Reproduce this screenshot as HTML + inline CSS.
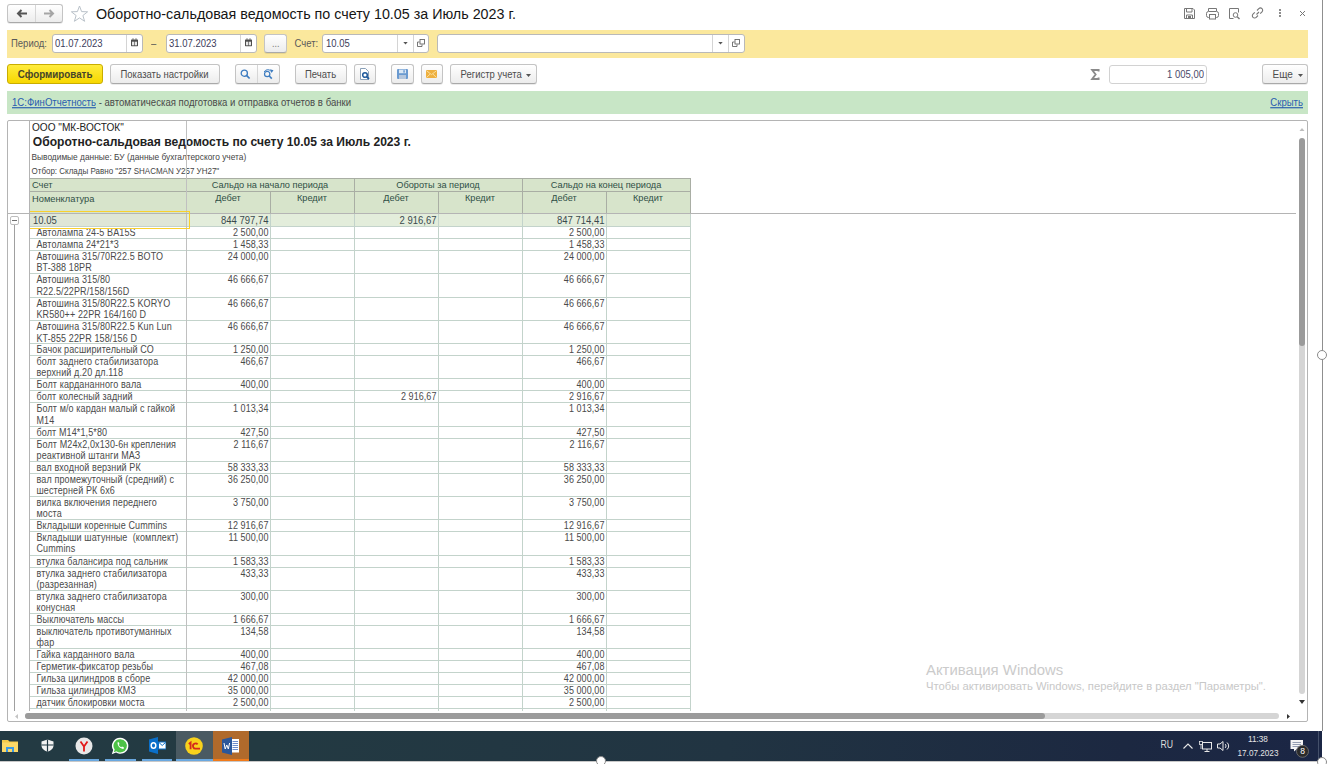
<!DOCTYPE html>
<html><head><meta charset="utf-8"><style>
html,body{margin:0;padding:0}
body{width:1327px;height:764px;overflow:hidden;position:relative;background:#fff;font-family:"Liberation Sans",sans-serif}
.a{position:absolute}
.t{position:absolute;white-space:pre;line-height:1}
svg.a{overflow:visible}
</style></head><body>
<div class="a" style="left:7px;top:4px;width:56px;height:19px;box-sizing:border-box;border:1px solid #c4c4c4;border-bottom-color:#a9a9a9;border-radius:3px;background:linear-gradient(#ffffff,#ececec);box-shadow:0 1px 0 rgba(0,0,0,0.08);"></div>
<div class="a" style="left:35px;top:5px;width:1px;height:17px;background:#d6d6d6"></div>
<svg class="a" style="left:16px;top:9px" width="12" height="9" viewBox="0 0 12 9"><path d="M11 4.5H3M5.5 1L2 4.5L5.5 8" fill="none" stroke="#555" stroke-width="2"/></svg>
<svg class="a" style="left:43px;top:9px" width="12" height="9" viewBox="0 0 12 9"><path d="M1 4.5H9M6.5 1L10 4.5L6.5 8" fill="none" stroke="#a5a5a5" stroke-width="2"/></svg>
<svg class="a" style="left:70px;top:5px" width="19" height="17" viewBox="0 0 19 17"><path d="M9.5 1L11.6 6.6L17.6 6.8L12.9 10.5L14.6 16.3L9.5 12.9L4.4 16.3L6.1 10.5L1.4 6.8L7.4 6.6Z" fill="none" stroke="#b9c1c9" stroke-width="1"/></svg>
<div class="t" style="left:96.00px;top:7px;font-size:14.3px;color:#151515;font-weight:400;transform:scaleY(1.07);transform-origin:50% 12px;">Оборотно-сальдовая ведомость по счету 10.05 за Июль 2023 г.</div>
<svg class="a" style="left:1183px;top:7px" width="13" height="13" viewBox="0 0 13 13"><path d="M1.5 1.5H10L11.5 3V11.5H1.5Z" fill="none" stroke="#777" stroke-width="1"/><path d="M3.5 1.5V5H9V1.5M3.5 11.5V8H9.5V11.5" fill="none" stroke="#777" stroke-width="1"/><rect x="5" y="9" width="3" height="2" fill="#777"/></svg>
<svg class="a" style="left:1205px;top:7px" width="15" height="13" viewBox="0 0 15 13"><path d="M3.5 4V1.5H11.5V4" fill="none" stroke="#777"/><rect x="1.5" y="4.5" width="12" height="6" rx="2" fill="none" stroke="#777"/><rect x="4.5" y="7.5" width="6" height="4.5" fill="#fff" stroke="#777"/></svg>
<svg class="a" style="left:1228px;top:7px" width="13" height="13" viewBox="0 0 13 13"><path d="M10.5 5.5V1.5H1.5V11.5H5.5" fill="none" stroke="#777"/><circle cx="7.5" cy="8" r="2.3" fill="none" stroke="#777"/><path d="M9.2 9.8L11.5 12" stroke="#777" stroke-width="1.4"/></svg>
<svg class="a" style="left:1251px;top:7px" width="13" height="12" viewBox="0 0 13 12"><path d="M5.5 7.5L8 5M6 3.5L7.8 1.7A2.1 2.1 0 0 1 11 4.9L9.2 6.7M7 8.5L5.2 10.3A2.1 2.1 0 0 1 2 7.1L3.8 5.3" fill="none" stroke="#777" stroke-width="1.1"/></svg>
<div class="a" style="left:1278.5px;top:9px;width:2px;height:2px;background:#666;border-radius:1px"></div>
<div class="a" style="left:1278.5px;top:12px;width:2px;height:2px;background:#666;border-radius:1px"></div>
<div class="a" style="left:1278.5px;top:15px;width:2px;height:2px;background:#666;border-radius:1px"></div>
<svg class="a" style="left:1299px;top:10px" width="7" height="7" viewBox="0 0 7 7"><path d="M1 1L6 6M6 1L1 6" stroke="#777" stroke-width="1"/></svg>
<div class="a" style="left:7px;top:29.5px;width:1301px;height:28px;background:#fbe89d"></div>
<div class="t" style="left:11.00px;top:39px;font-size:9.5px;color:#5a5a5a;font-weight:400;transform:scaleY(1.15);transform-origin:50% 8px;">Период:</div>
<div class="a" style="left:52px;top:34px;width:91px;height:19px;box-sizing:border-box;border:1px solid #b9b9b9;border-radius:3px;background:#fff;"></div>
<div class="a" style="left:126px;top:35px;width:1px;height:17px;background:#d4d4d4"></div>
<div class="t" style="left:55.00px;top:39px;font-size:9.5px;color:#3c3c5a;font-weight:400;transform:scaleY(1.15);transform-origin:50% 8px;">01.07.2023</div>
<svg class="a" style="left:131px;top:38px" width="7" height="9" viewBox="0 0 7 9"><path d="M2 0V2M5 0V2" stroke="#777" stroke-width="0.8"/><rect x="0" y="1.5" width="7" height="6.7" rx="0.6" fill="#4d4d4d"/><rect x="1" y="3.7" width="2.2" height="3.6" fill="#e6e6e6"/><rect x="3.8" y="3.7" width="2.2" height="3.6" fill="#e6e6e6"/></svg>
<div class="t" style="left:151.00px;top:39px;font-size:9.5px;color:#555;font-weight:400;transform:scaleY(1.15);transform-origin:50% 8px;">–</div>
<div class="a" style="left:166px;top:34px;width:91px;height:19px;box-sizing:border-box;border:1px solid #b9b9b9;border-radius:3px;background:#fff;"></div>
<div class="a" style="left:240px;top:35px;width:1px;height:17px;background:#d4d4d4"></div>
<div class="t" style="left:169.00px;top:39px;font-size:9.5px;color:#3c3c5a;font-weight:400;transform:scaleY(1.15);transform-origin:50% 8px;">31.07.2023</div>
<svg class="a" style="left:245px;top:38px" width="7" height="9" viewBox="0 0 7 9"><path d="M2 0V2M5 0V2" stroke="#777" stroke-width="0.8"/><rect x="0" y="1.5" width="7" height="6.7" rx="0.6" fill="#4d4d4d"/><rect x="1" y="3.7" width="2.2" height="3.6" fill="#e6e6e6"/><rect x="3.8" y="3.7" width="2.2" height="3.6" fill="#e6e6e6"/></svg>
<div class="a" style="left:264px;top:34px;width:23px;height:19px;box-sizing:border-box;border:1px solid #c4c4c4;border-bottom-color:#a9a9a9;border-radius:3px;background:linear-gradient(#ffffff,#ececec);box-shadow:0 1px 0 rgba(0,0,0,0.08);"></div>
<div class="t" style="left:272.00px;top:40px;font-size:9px;color:#777;font-weight:400;transform:scaleY(1.15);transform-origin:50% 7px;">...</div>
<div class="t" style="left:294.50px;top:39px;font-size:9.5px;color:#5a5a5a;font-weight:400;transform:scaleY(1.15);transform-origin:50% 8px;">Счет:</div>
<div class="a" style="left:322px;top:34px;width:107px;height:19px;box-sizing:border-box;border:1px solid #b9b9b9;border-radius:3px;background:#fff;"></div>
<div class="a" style="left:397px;top:35px;width:1px;height:17px;background:#d4d4d4"></div>
<div class="a" style="left:413px;top:35px;width:1px;height:17px;background:#d4d4d4"></div>
<div class="t" style="left:326.00px;top:39px;font-size:9.5px;color:#3c3c5a;font-weight:400;transform:scaleY(1.15);transform-origin:50% 8px;">10.05</div>
<svg class="a" style="left:403px;top:42px" width="5" height="3" viewBox="0 0 5 3"><path d="M0.3 0H4.7L2.5 2.6Z" fill="#555"/></svg>
<svg class="a" style="left:417px;top:39px" width="8" height="8" viewBox="0 0 8 8"><rect x="3" y="0.5" width="4.5" height="4.5" fill="none" stroke="#666" stroke-width="0.9"/><path d="M2.5 3H0.5V7.5H5V5.5" fill="none" stroke="#666" stroke-width="0.9"/></svg>
<div class="a" style="left:437px;top:34px;width:308px;height:19px;box-sizing:border-box;border:1px solid #b9b9b9;border-radius:3px;background:#fff;"></div>
<div class="a" style="left:712px;top:35px;width:1px;height:17px;background:#d4d4d4"></div>
<div class="a" style="left:728px;top:35px;width:1px;height:17px;background:#d4d4d4"></div>
<svg class="a" style="left:718px;top:42px" width="5" height="3" viewBox="0 0 5 3"><path d="M0.3 0H4.7L2.5 2.6Z" fill="#555"/></svg>
<svg class="a" style="left:732px;top:39px" width="8" height="8" viewBox="0 0 8 8"><rect x="3" y="0.5" width="4.5" height="4.5" fill="none" stroke="#666" stroke-width="0.9"/><path d="M2.5 3H0.5V7.5H5V5.5" fill="none" stroke="#666" stroke-width="0.9"/></svg>
<div class="a" style="left:7px;top:64px;width:96px;height:20px;box-sizing:border-box;border:1px solid #c9ad00;border-radius:3px;background:linear-gradient(#ffec3d,#f7d700);"></div>
<div class="t" style="left:17.80px;top:70px;font-size:9.8px;color:#45452a;font-weight:700;transform:scaleY(1.15);transform-origin:50% 8px;">Сформировать</div>
<div class="a" style="left:110px;top:64px;width:110px;height:20px;box-sizing:border-box;border:1px solid #c4c4c4;border-bottom-color:#a9a9a9;border-radius:3px;background:linear-gradient(#ffffff,#ececec);box-shadow:0 1px 0 rgba(0,0,0,0.08);"></div>
<div class="t" style="left:120.50px;top:70px;font-size:9.5px;color:#4d4d4d;font-weight:400;transform:scaleY(1.15);transform-origin:50% 8px;">Показать настройки</div>
<div class="a" style="left:235px;top:64px;width:45px;height:20px;box-sizing:border-box;border:1px solid #c4c4c4;border-bottom-color:#a9a9a9;border-radius:3px;background:linear-gradient(#ffffff,#ececec);box-shadow:0 1px 0 rgba(0,0,0,0.08);"></div>
<div class="a" style="left:257px;top:65px;width:1px;height:18px;background:#d6d6d6"></div>
<svg class="a" style="left:240px;top:69px" width="11" height="10" viewBox="0 0 11 10"><circle cx="4.3" cy="4.2" r="3.1" fill="none" stroke="#3d7cc0" stroke-width="1.3"/><path d="M6.5 6.4L9.6 9.5" stroke="#3d7cc0" stroke-width="1.7"/></svg>
<svg class="a" style="left:263px;top:69px" width="11" height="10" viewBox="0 0 11 10"><circle cx="4.2" cy="5" r="2.7" fill="none" stroke="#3d7cc0" stroke-width="1.2"/><path d="M6.2 7L8.8 9.6" stroke="#3d7cc0" stroke-width="1.6"/><path d="M1.2 3A4 4 0 0 1 7.8 2" fill="none" stroke="#3d7cc0" stroke-width="1"/><path d="M7 0.2L10.5 1.2L8.5 4Z" fill="#3d7cc0"/></svg>
<div class="a" style="left:295px;top:64px;width:52px;height:20px;box-sizing:border-box;border:1px solid #c4c4c4;border-bottom-color:#a9a9a9;border-radius:3px;background:linear-gradient(#ffffff,#ececec);box-shadow:0 1px 0 rgba(0,0,0,0.08);"></div>
<div class="t" style="left:305.00px;top:70px;font-size:9.5px;color:#4d4d4d;font-weight:400;transform:scaleY(1.15);transform-origin:50% 8px;">Печать</div>
<div class="a" style="left:354px;top:64px;width:22px;height:20px;box-sizing:border-box;border:1px solid #c4c4c4;border-bottom-color:#a9a9a9;border-radius:3px;background:linear-gradient(#ffffff,#ececec);box-shadow:0 1px 0 rgba(0,0,0,0.08);"></div>
<svg class="a" style="left:359px;top:67px" width="12" height="14" viewBox="0 0 12 14"><path d="M1.5 1.5H6.5L9.5 4.5V12.5H1.5Z" fill="#fff" stroke="#8aa0b8"/><circle cx="6" cy="8" r="2.3" fill="none" stroke="#1f5a9c" stroke-width="1.5"/><path d="M7.6 9.6L10 12" stroke="#1f5a9c" stroke-width="1.8"/></svg>
<div class="a" style="left:391px;top:64px;width:23px;height:20px;box-sizing:border-box;border:1px solid #c4c4c4;border-bottom-color:#a9a9a9;border-radius:3px;background:linear-gradient(#ffffff,#ececec);box-shadow:0 1px 0 rgba(0,0,0,0.08);"></div>
<svg class="a" style="left:397px;top:69px" width="11" height="10" viewBox="0 0 11 10"><rect x="0" y="0" width="11" height="10" rx="1" fill="#6a9ad0"/><rect x="2" y="0.6" width="7" height="3.6" fill="#dbe8f5"/><rect x="6.3" y="1.2" width="1.5" height="2.4" fill="#6a9ad0"/><rect x="2" y="6" width="7" height="4" fill="#b4c6dc"/></svg>
<div class="a" style="left:421px;top:64px;width:22px;height:20px;box-sizing:border-box;border:1px solid #c4c4c4;border-bottom-color:#a9a9a9;border-radius:3px;background:linear-gradient(#ffffff,#ececec);box-shadow:0 1px 0 rgba(0,0,0,0.08);"></div>
<svg class="a" style="left:426px;top:70px" width="11" height="8" viewBox="0 0 11 8"><rect x="0" y="0" width="11" height="8" rx="0.8" fill="#eeb040"/><path d="M0.6 0.8L5.5 4.6L10.4 0.8M0.6 7.4L4 4.2M10.4 7.4L7 4.2" fill="none" stroke="#fbe3a8" stroke-width="0.9"/></svg>
<div class="a" style="left:450px;top:64px;width:87px;height:20px;box-sizing:border-box;border:1px solid #c4c4c4;border-bottom-color:#a9a9a9;border-radius:3px;background:linear-gradient(#ffffff,#ececec);box-shadow:0 1px 0 rgba(0,0,0,0.08);"></div>
<div class="t" style="left:460.50px;top:70px;font-size:9.5px;color:#4d4d4d;font-weight:400;transform:scaleY(1.15);transform-origin:50% 8px;">Регистр учета</div>
<svg class="a" style="left:526px;top:74px" width="5" height="3" viewBox="0 0 5 3"><path d="M0 0H5L2.5 3Z" fill="#555"/></svg>
<svg class="a" style="left:1091px;top:69px" width="9" height="11" viewBox="0 0 9 11"><path d="M7.6 2.6V1H1.2L4.6 5.5L1.2 10H7.6V8.4" fill="none" stroke="#8a8a8a" stroke-width="1.9" stroke-linejoin="miter"/></svg>
<div class="a" style="left:1109px;top:65px;width:98px;height:19px;box-sizing:border-box;border:1px solid #d2d2d2;border-radius:3px;background:#fff;"></div>
<div class="t" style="right:123.00px;top:70px;font-size:9.5px;color:#4a4a6a;font-weight:400;transform:scaleY(1.15);transform-origin:50% 8px;">1 005,00</div>
<div class="a" style="left:1262px;top:64px;width:46px;height:20px;box-sizing:border-box;border:1px solid #c4c4c4;border-bottom-color:#a9a9a9;border-radius:3px;background:linear-gradient(#ffffff,#ececec);box-shadow:0 1px 0 rgba(0,0,0,0.08);"></div>
<div class="t" style="left:1272.50px;top:70px;font-size:10px;color:#4d4d4d;font-weight:400;transform:scaleY(1.15);transform-origin:50% 8px;">Еще</div>
<svg class="a" style="left:1298px;top:74px" width="5" height="3" viewBox="0 0 5 3"><path d="M0 0H5L2.5 3Z" fill="#555"/></svg>
<div class="a" style="left:7px;top:91px;width:1301px;height:23px;background:#c8e6c6"></div>
<div class="t" style="left:12.00px;top:98px;font-size:9.6px;color:#2a5db0;font-weight:400;transform:scaleY(1.15);transform-origin:50% 8px;text-decoration:underline;text-decoration-skip-ink:none;">1С:ФинОтчетность</div>
<div class="t" style="left:96.00px;top:98px;font-size:9.6px;color:#4a4a4a;font-weight:400;transform:scaleY(1.15);transform-origin:50% 8px;white-space:pre;"> - автоматическая подготовка и отправка отчетов в банки</div>
<div class="t" style="right:24.00px;top:98px;font-size:9.6px;color:#2a5db0;font-weight:400;transform:scaleY(1.15);transform-origin:50% 8px;text-decoration:underline;text-decoration-skip-ink:none;">Скрыть</div>
<div class="a" style="left:7px;top:120px;width:1301px;height:602px;box-sizing:border-box;border:1px solid #b4b4b4;border-radius:2px;background:#fff;"></div>
<div class="t" style="left:32.00px;top:123px;font-size:10.1px;color:#222;font-weight:400;transform:scaleY(1.15);transform-origin:50% 8px;">ООО &quot;МК-ВОСТОК&quot;</div>
<div class="t" style="left:32.80px;top:136px;font-size:12.08px;color:#222;font-weight:700;transform:scaleY(1.1);transform-origin:50% 10px;">Оборотно-сальдовая ведомость по счету 10.05 за Июль 2023 г.</div>
<div class="t" style="left:31.50px;top:153px;font-size:8.35px;color:#444;font-weight:400;transform:scaleY(1.15);transform-origin:50% 7px;">Выводимые данные: БУ (данные бухгалтерского учета)</div>
<div class="t" style="left:31.50px;top:168px;font-size:8px;color:#444;font-weight:400;transform:scaleY(1.15);transform-origin:50% 6px;">Отбор: Склады Равно &quot;257 SHACMAN У257 УН27&quot;</div>
<div class="a" style="left:29px;top:178px;width:661px;height:35px;background:#d7e4cb"></div>
<div class="a" style="left:29px;top:178px;width:662px;height:1px;background:#a9aea4"></div>
<div class="a" style="left:29px;top:191px;width:662px;height:1px;background:#a9aea4"></div>
<div class="a" style="left:270px;top:191px;width:1px;height:22px;background:#a9aea4"></div>
<div class="a" style="left:438px;top:191px;width:1px;height:22px;background:#a9aea4"></div>
<div class="a" style="left:606px;top:191px;width:1px;height:22px;background:#a9aea4"></div>
<div class="a" style="left:354px;top:178px;width:1px;height:35px;background:#a9aea4"></div>
<div class="a" style="left:522px;top:178px;width:1px;height:35px;background:#a9aea4"></div>
<div class="a" style="left:690px;top:178px;width:1px;height:35px;background:#a9aea4"></div>
<div class="t" style="left:32.00px;top:181px;font-size:9.3px;color:#2f5046;font-weight:400;transform:scaleY(1.04);transform-origin:50% 7px;">Счет</div>
<div class="t" style="left:32.00px;top:195px;font-size:9.3px;color:#2f5046;font-weight:400;transform:scaleY(1.04);transform-origin:50% 7px;">Номенклатура</div>
<div class="t" style="left:186.00px;width:168.00px;text-align:center;top:181px;font-size:9.2px;color:#2f5046;font-weight:400;transform:scaleY(1.04);transform-origin:50% 7px;">Сальдо на начало периода</div>
<div class="t" style="left:354.00px;width:168.00px;text-align:center;top:181px;font-size:9.2px;color:#2f5046;font-weight:400;transform:scaleY(1.04);transform-origin:50% 7px;">Обороты за период</div>
<div class="t" style="left:522.00px;width:168.00px;text-align:center;top:181px;font-size:9.2px;color:#2f5046;font-weight:400;transform:scaleY(1.04);transform-origin:50% 7px;">Сальдо на конец периода</div>
<div class="t" style="left:186.00px;width:84.00px;text-align:center;top:194px;font-size:9.2px;color:#2f5046;font-weight:400;transform:scaleY(1.04);transform-origin:50% 7px;">Дебет</div>
<div class="t" style="left:270.00px;width:84.00px;text-align:center;top:194px;font-size:9.2px;color:#2f5046;font-weight:400;transform:scaleY(1.04);transform-origin:50% 7px;">Кредит</div>
<div class="t" style="left:354.00px;width:84.00px;text-align:center;top:194px;font-size:9.2px;color:#2f5046;font-weight:400;transform:scaleY(1.04);transform-origin:50% 7px;">Дебет</div>
<div class="t" style="left:438.00px;width:84.00px;text-align:center;top:194px;font-size:9.2px;color:#2f5046;font-weight:400;transform:scaleY(1.04);transform-origin:50% 7px;">Кредит</div>
<div class="t" style="left:522.00px;width:84.00px;text-align:center;top:194px;font-size:9.2px;color:#2f5046;font-weight:400;transform:scaleY(1.04);transform-origin:50% 7px;">Дебет</div>
<div class="t" style="left:606.00px;width:84.00px;text-align:center;top:194px;font-size:9.2px;color:#2f5046;font-weight:400;transform:scaleY(1.04);transform-origin:50% 7px;">Кредит</div>
<div class="a" style="left:29px;top:214px;width:661px;height:12px;background:#e3eddb"></div>
<div class="a" style="left:29px;top:214px;width:158px;height:12px;background:#dfe6d6"></div>
<div class="a" style="left:29px;top:226px;width:662px;height:1px;background:#c3d3cb"></div>
<div class="a" style="left:29px;top:238px;width:662px;height:1px;background:#c3d3cb"></div>
<div class="a" style="left:29px;top:250px;width:662px;height:1px;background:#c3d3cb"></div>
<div class="a" style="left:29px;top:273px;width:662px;height:1px;background:#c3d3cb"></div>
<div class="a" style="left:29px;top:297px;width:662px;height:1px;background:#c3d3cb"></div>
<div class="a" style="left:29px;top:320px;width:662px;height:1px;background:#c3d3cb"></div>
<div class="a" style="left:29px;top:343px;width:662px;height:1px;background:#c3d3cb"></div>
<div class="a" style="left:29px;top:355px;width:662px;height:1px;background:#c3d3cb"></div>
<div class="a" style="left:29px;top:378px;width:662px;height:1px;background:#c3d3cb"></div>
<div class="a" style="left:29px;top:390px;width:662px;height:1px;background:#c3d3cb"></div>
<div class="a" style="left:29px;top:402px;width:662px;height:1px;background:#c3d3cb"></div>
<div class="a" style="left:29px;top:426px;width:662px;height:1px;background:#c3d3cb"></div>
<div class="a" style="left:29px;top:438px;width:662px;height:1px;background:#c3d3cb"></div>
<div class="a" style="left:29px;top:461px;width:662px;height:1px;background:#c3d3cb"></div>
<div class="a" style="left:29px;top:473px;width:662px;height:1px;background:#c3d3cb"></div>
<div class="a" style="left:29px;top:496px;width:662px;height:1px;background:#c3d3cb"></div>
<div class="a" style="left:29px;top:519px;width:662px;height:1px;background:#c3d3cb"></div>
<div class="a" style="left:29px;top:531px;width:662px;height:1px;background:#c3d3cb"></div>
<div class="a" style="left:29px;top:555px;width:662px;height:1px;background:#c3d3cb"></div>
<div class="a" style="left:29px;top:567px;width:662px;height:1px;background:#c3d3cb"></div>
<div class="a" style="left:29px;top:590px;width:662px;height:1px;background:#c3d3cb"></div>
<div class="a" style="left:29px;top:613px;width:662px;height:1px;background:#c3d3cb"></div>
<div class="a" style="left:29px;top:625px;width:662px;height:1px;background:#c3d3cb"></div>
<div class="a" style="left:29px;top:648px;width:662px;height:1px;background:#c3d3cb"></div>
<div class="a" style="left:29px;top:660px;width:662px;height:1px;background:#c3d3cb"></div>
<div class="a" style="left:29px;top:672px;width:662px;height:1px;background:#c3d3cb"></div>
<div class="a" style="left:29px;top:684px;width:662px;height:1px;background:#c3d3cb"></div>
<div class="a" style="left:29px;top:696px;width:662px;height:1px;background:#c3d3cb"></div>
<div class="a" style="left:29px;top:708px;width:662px;height:1px;background:#c3d3cb"></div>
<div class="a" style="left:270px;top:214px;width:1px;height:497px;background:#c3d3cb"></div>
<div class="a" style="left:354px;top:214px;width:1px;height:497px;background:#c3d3cb"></div>
<div class="a" style="left:438px;top:214px;width:1px;height:497px;background:#c3d3cb"></div>
<div class="a" style="left:522px;top:214px;width:1px;height:497px;background:#c3d3cb"></div>
<div class="a" style="left:606px;top:214px;width:1px;height:497px;background:#c3d3cb"></div>
<div class="a" style="left:690px;top:214px;width:1px;height:497px;background:#c3d3cb"></div>
<div class="t" style="left:33.00px;top:216px;font-size:9.5px;color:#3a4a4e;font-weight:400;transform:scaleY(1.12);transform-origin:50% 8px;">10.05</div>
<div class="t" style="right:1058.50px;top:216px;font-size:9.5px;color:#3a4a4e;font-weight:400;transform:scaleY(1.12);transform-origin:50% 8px;">844 797,74</div>
<div class="t" style="right:890.50px;top:216px;font-size:9.5px;color:#3a4a4e;font-weight:400;transform:scaleY(1.12);transform-origin:50% 8px;">2 916,67</div>
<div class="t" style="right:722.50px;top:216px;font-size:9.5px;color:#3a4a4e;font-weight:400;transform:scaleY(1.12);transform-origin:50% 8px;">847 714,41</div>
<div class="t" style="left:36.50px;top:229px;font-size:9px;color:#4a4a4a;font-weight:400;transform:scaleY(1.12);transform-origin:50% 7px;letter-spacing:0.12px;">Автолампа 24-5 BA15S</div>
<div class="t" style="right:1058.50px;top:229px;font-size:9px;color:#4a4a4a;font-weight:400;transform:scaleY(1.12);transform-origin:50% 7px;letter-spacing:0.07px;">2 500,00</div>
<div class="t" style="right:722.50px;top:229px;font-size:9px;color:#4a4a4a;font-weight:400;transform:scaleY(1.12);transform-origin:50% 7px;letter-spacing:0.07px;">2 500,00</div>
<div class="t" style="left:36.50px;top:241px;font-size:9px;color:#4a4a4a;font-weight:400;transform:scaleY(1.12);transform-origin:50% 7px;letter-spacing:0.12px;">Автолампа 24*21*3</div>
<div class="t" style="right:1058.50px;top:241px;font-size:9px;color:#4a4a4a;font-weight:400;transform:scaleY(1.12);transform-origin:50% 7px;letter-spacing:0.07px;">1 458,33</div>
<div class="t" style="right:722.50px;top:241px;font-size:9px;color:#4a4a4a;font-weight:400;transform:scaleY(1.12);transform-origin:50% 7px;letter-spacing:0.07px;">1 458,33</div>
<div class="t" style="left:36.50px;top:253px;font-size:9px;color:#4a4a4a;font-weight:400;transform:scaleY(1.12);transform-origin:50% 7px;letter-spacing:0.12px;">Автошина 315/70R22.5 BOTO</div>
<div class="t" style="left:36.50px;top:264px;font-size:9px;color:#4a4a4a;font-weight:400;transform:scaleY(1.12);transform-origin:50% 7px;letter-spacing:0.12px;">BT-388 18PR</div>
<div class="t" style="right:1058.50px;top:253px;font-size:9px;color:#4a4a4a;font-weight:400;transform:scaleY(1.12);transform-origin:50% 7px;letter-spacing:0.07px;">24 000,00</div>
<div class="t" style="right:722.50px;top:253px;font-size:9px;color:#4a4a4a;font-weight:400;transform:scaleY(1.12);transform-origin:50% 7px;letter-spacing:0.07px;">24 000,00</div>
<div class="t" style="left:36.50px;top:276px;font-size:9px;color:#4a4a4a;font-weight:400;transform:scaleY(1.12);transform-origin:50% 7px;letter-spacing:0.12px;">Автошина 315/80</div>
<div class="t" style="left:36.50px;top:288px;font-size:9px;color:#4a4a4a;font-weight:400;transform:scaleY(1.12);transform-origin:50% 7px;letter-spacing:0.12px;">R22.5/22PR/158/156D</div>
<div class="t" style="right:1058.50px;top:276px;font-size:9px;color:#4a4a4a;font-weight:400;transform:scaleY(1.12);transform-origin:50% 7px;letter-spacing:0.07px;">46 666,67</div>
<div class="t" style="right:722.50px;top:276px;font-size:9px;color:#4a4a4a;font-weight:400;transform:scaleY(1.12);transform-origin:50% 7px;letter-spacing:0.07px;">46 666,67</div>
<div class="t" style="left:36.50px;top:300px;font-size:9px;color:#4a4a4a;font-weight:400;transform:scaleY(1.12);transform-origin:50% 7px;letter-spacing:0.12px;">Автошина 315/80R22.5 KORYO</div>
<div class="t" style="left:36.50px;top:311px;font-size:9px;color:#4a4a4a;font-weight:400;transform:scaleY(1.12);transform-origin:50% 7px;letter-spacing:0.12px;">KR580++ 22PR 164/160 D</div>
<div class="t" style="right:1058.50px;top:300px;font-size:9px;color:#4a4a4a;font-weight:400;transform:scaleY(1.12);transform-origin:50% 7px;letter-spacing:0.07px;">46 666,67</div>
<div class="t" style="right:722.50px;top:300px;font-size:9px;color:#4a4a4a;font-weight:400;transform:scaleY(1.12);transform-origin:50% 7px;letter-spacing:0.07px;">46 666,67</div>
<div class="t" style="left:36.50px;top:323px;font-size:9px;color:#4a4a4a;font-weight:400;transform:scaleY(1.12);transform-origin:50% 7px;letter-spacing:0.12px;">Автошина 315/80R22.5 Kun Lun</div>
<div class="t" style="left:36.50px;top:335px;font-size:9px;color:#4a4a4a;font-weight:400;transform:scaleY(1.12);transform-origin:50% 7px;letter-spacing:0.12px;">KT-855 22PR 158/156 D</div>
<div class="t" style="right:1058.50px;top:323px;font-size:9px;color:#4a4a4a;font-weight:400;transform:scaleY(1.12);transform-origin:50% 7px;letter-spacing:0.07px;">46 666,67</div>
<div class="t" style="right:722.50px;top:323px;font-size:9px;color:#4a4a4a;font-weight:400;transform:scaleY(1.12);transform-origin:50% 7px;letter-spacing:0.07px;">46 666,67</div>
<div class="t" style="left:36.50px;top:346px;font-size:9px;color:#4a4a4a;font-weight:400;transform:scaleY(1.12);transform-origin:50% 7px;letter-spacing:0.12px;">Бачок расширительный СО</div>
<div class="t" style="right:1058.50px;top:346px;font-size:9px;color:#4a4a4a;font-weight:400;transform:scaleY(1.12);transform-origin:50% 7px;letter-spacing:0.07px;">1 250,00</div>
<div class="t" style="right:722.50px;top:346px;font-size:9px;color:#4a4a4a;font-weight:400;transform:scaleY(1.12);transform-origin:50% 7px;letter-spacing:0.07px;">1 250,00</div>
<div class="t" style="left:36.50px;top:358px;font-size:9px;color:#4a4a4a;font-weight:400;transform:scaleY(1.12);transform-origin:50% 7px;letter-spacing:0.12px;">болт заднего стабилизатора</div>
<div class="t" style="left:36.50px;top:369px;font-size:9px;color:#4a4a4a;font-weight:400;transform:scaleY(1.12);transform-origin:50% 7px;letter-spacing:0.12px;">верхний д.20 дл.118</div>
<div class="t" style="right:1058.50px;top:358px;font-size:9px;color:#4a4a4a;font-weight:400;transform:scaleY(1.12);transform-origin:50% 7px;letter-spacing:0.07px;">466,67</div>
<div class="t" style="right:722.50px;top:358px;font-size:9px;color:#4a4a4a;font-weight:400;transform:scaleY(1.12);transform-origin:50% 7px;letter-spacing:0.07px;">466,67</div>
<div class="t" style="left:36.50px;top:381px;font-size:9px;color:#4a4a4a;font-weight:400;transform:scaleY(1.12);transform-origin:50% 7px;letter-spacing:0.12px;">Болт кардананного вала</div>
<div class="t" style="right:1058.50px;top:381px;font-size:9px;color:#4a4a4a;font-weight:400;transform:scaleY(1.12);transform-origin:50% 7px;letter-spacing:0.07px;">400,00</div>
<div class="t" style="right:722.50px;top:381px;font-size:9px;color:#4a4a4a;font-weight:400;transform:scaleY(1.12);transform-origin:50% 7px;letter-spacing:0.07px;">400,00</div>
<div class="t" style="left:36.50px;top:393px;font-size:9px;color:#4a4a4a;font-weight:400;transform:scaleY(1.12);transform-origin:50% 7px;letter-spacing:0.12px;">болт колесный задний</div>
<div class="t" style="right:890.50px;top:393px;font-size:9px;color:#4a4a4a;font-weight:400;transform:scaleY(1.12);transform-origin:50% 7px;letter-spacing:0.07px;">2 916,67</div>
<div class="t" style="right:722.50px;top:393px;font-size:9px;color:#4a4a4a;font-weight:400;transform:scaleY(1.12);transform-origin:50% 7px;letter-spacing:0.07px;">2 916,67</div>
<div class="t" style="left:36.50px;top:405px;font-size:9px;color:#4a4a4a;font-weight:400;transform:scaleY(1.12);transform-origin:50% 7px;letter-spacing:0.12px;">Болт м/о кардан малый с гайкой</div>
<div class="t" style="left:36.50px;top:417px;font-size:9px;color:#4a4a4a;font-weight:400;transform:scaleY(1.12);transform-origin:50% 7px;letter-spacing:0.12px;">М14</div>
<div class="t" style="right:1058.50px;top:405px;font-size:9px;color:#4a4a4a;font-weight:400;transform:scaleY(1.12);transform-origin:50% 7px;letter-spacing:0.07px;">1 013,34</div>
<div class="t" style="right:722.50px;top:405px;font-size:9px;color:#4a4a4a;font-weight:400;transform:scaleY(1.12);transform-origin:50% 7px;letter-spacing:0.07px;">1 013,34</div>
<div class="t" style="left:36.50px;top:429px;font-size:9px;color:#4a4a4a;font-weight:400;transform:scaleY(1.12);transform-origin:50% 7px;letter-spacing:0.12px;">болт М14*1,5*80</div>
<div class="t" style="right:1058.50px;top:429px;font-size:9px;color:#4a4a4a;font-weight:400;transform:scaleY(1.12);transform-origin:50% 7px;letter-spacing:0.07px;">427,50</div>
<div class="t" style="right:722.50px;top:429px;font-size:9px;color:#4a4a4a;font-weight:400;transform:scaleY(1.12);transform-origin:50% 7px;letter-spacing:0.07px;">427,50</div>
<div class="t" style="left:36.50px;top:441px;font-size:9px;color:#4a4a4a;font-weight:400;transform:scaleY(1.12);transform-origin:50% 7px;letter-spacing:0.12px;">Болт М24х2,0х130-6н крепления</div>
<div class="t" style="left:36.50px;top:452px;font-size:9px;color:#4a4a4a;font-weight:400;transform:scaleY(1.12);transform-origin:50% 7px;letter-spacing:0.12px;">реактивной штанги МАЗ</div>
<div class="t" style="right:1058.50px;top:441px;font-size:9px;color:#4a4a4a;font-weight:400;transform:scaleY(1.12);transform-origin:50% 7px;letter-spacing:0.07px;">2 116,67</div>
<div class="t" style="right:722.50px;top:441px;font-size:9px;color:#4a4a4a;font-weight:400;transform:scaleY(1.12);transform-origin:50% 7px;letter-spacing:0.07px;">2 116,67</div>
<div class="t" style="left:36.50px;top:464px;font-size:9px;color:#4a4a4a;font-weight:400;transform:scaleY(1.12);transform-origin:50% 7px;letter-spacing:0.12px;">вал входной верзний РК</div>
<div class="t" style="right:1058.50px;top:464px;font-size:9px;color:#4a4a4a;font-weight:400;transform:scaleY(1.12);transform-origin:50% 7px;letter-spacing:0.07px;">58 333,33</div>
<div class="t" style="right:722.50px;top:464px;font-size:9px;color:#4a4a4a;font-weight:400;transform:scaleY(1.12);transform-origin:50% 7px;letter-spacing:0.07px;">58 333,33</div>
<div class="t" style="left:36.50px;top:476px;font-size:9px;color:#4a4a4a;font-weight:400;transform:scaleY(1.12);transform-origin:50% 7px;letter-spacing:0.12px;">вал промежуточный (средний) с</div>
<div class="t" style="left:36.50px;top:487px;font-size:9px;color:#4a4a4a;font-weight:400;transform:scaleY(1.12);transform-origin:50% 7px;letter-spacing:0.12px;">шестерней РК 6х6</div>
<div class="t" style="right:1058.50px;top:476px;font-size:9px;color:#4a4a4a;font-weight:400;transform:scaleY(1.12);transform-origin:50% 7px;letter-spacing:0.07px;">36 250,00</div>
<div class="t" style="right:722.50px;top:476px;font-size:9px;color:#4a4a4a;font-weight:400;transform:scaleY(1.12);transform-origin:50% 7px;letter-spacing:0.07px;">36 250,00</div>
<div class="t" style="left:36.50px;top:499px;font-size:9px;color:#4a4a4a;font-weight:400;transform:scaleY(1.12);transform-origin:50% 7px;letter-spacing:0.12px;">вилка включения переднего</div>
<div class="t" style="left:36.50px;top:510px;font-size:9px;color:#4a4a4a;font-weight:400;transform:scaleY(1.12);transform-origin:50% 7px;letter-spacing:0.12px;">моста</div>
<div class="t" style="right:1058.50px;top:499px;font-size:9px;color:#4a4a4a;font-weight:400;transform:scaleY(1.12);transform-origin:50% 7px;letter-spacing:0.07px;">3 750,00</div>
<div class="t" style="right:722.50px;top:499px;font-size:9px;color:#4a4a4a;font-weight:400;transform:scaleY(1.12);transform-origin:50% 7px;letter-spacing:0.07px;">3 750,00</div>
<div class="t" style="left:36.50px;top:522px;font-size:9px;color:#4a4a4a;font-weight:400;transform:scaleY(1.12);transform-origin:50% 7px;letter-spacing:0.12px;">Вкладыши коренные Cummins</div>
<div class="t" style="right:1058.50px;top:522px;font-size:9px;color:#4a4a4a;font-weight:400;transform:scaleY(1.12);transform-origin:50% 7px;letter-spacing:0.07px;">12 916,67</div>
<div class="t" style="right:722.50px;top:522px;font-size:9px;color:#4a4a4a;font-weight:400;transform:scaleY(1.12);transform-origin:50% 7px;letter-spacing:0.07px;">12 916,67</div>
<div class="t" style="left:36.50px;top:534px;font-size:9px;color:#4a4a4a;font-weight:400;transform:scaleY(1.12);transform-origin:50% 7px;letter-spacing:0.12px;">Вкладыши шатунные  (комплект)</div>
<div class="t" style="left:36.50px;top:545px;font-size:9px;color:#4a4a4a;font-weight:400;transform:scaleY(1.12);transform-origin:50% 7px;letter-spacing:0.12px;">Cummins</div>
<div class="t" style="right:1058.50px;top:534px;font-size:9px;color:#4a4a4a;font-weight:400;transform:scaleY(1.12);transform-origin:50% 7px;letter-spacing:0.07px;">11 500,00</div>
<div class="t" style="right:722.50px;top:534px;font-size:9px;color:#4a4a4a;font-weight:400;transform:scaleY(1.12);transform-origin:50% 7px;letter-spacing:0.07px;">11 500,00</div>
<div class="t" style="left:36.50px;top:558px;font-size:9px;color:#4a4a4a;font-weight:400;transform:scaleY(1.12);transform-origin:50% 7px;letter-spacing:0.12px;">втулка балансира под сальник</div>
<div class="t" style="right:1058.50px;top:558px;font-size:9px;color:#4a4a4a;font-weight:400;transform:scaleY(1.12);transform-origin:50% 7px;letter-spacing:0.07px;">1 583,33</div>
<div class="t" style="right:722.50px;top:558px;font-size:9px;color:#4a4a4a;font-weight:400;transform:scaleY(1.12);transform-origin:50% 7px;letter-spacing:0.07px;">1 583,33</div>
<div class="t" style="left:36.50px;top:570px;font-size:9px;color:#4a4a4a;font-weight:400;transform:scaleY(1.12);transform-origin:50% 7px;letter-spacing:0.12px;">втулка заднего стабилизатора</div>
<div class="t" style="left:36.50px;top:581px;font-size:9px;color:#4a4a4a;font-weight:400;transform:scaleY(1.12);transform-origin:50% 7px;letter-spacing:0.12px;">(разрезанная)</div>
<div class="t" style="right:1058.50px;top:570px;font-size:9px;color:#4a4a4a;font-weight:400;transform:scaleY(1.12);transform-origin:50% 7px;letter-spacing:0.07px;">433,33</div>
<div class="t" style="right:722.50px;top:570px;font-size:9px;color:#4a4a4a;font-weight:400;transform:scaleY(1.12);transform-origin:50% 7px;letter-spacing:0.07px;">433,33</div>
<div class="t" style="left:36.50px;top:593px;font-size:9px;color:#4a4a4a;font-weight:400;transform:scaleY(1.12);transform-origin:50% 7px;letter-spacing:0.12px;">втулка заднего стабилизатора</div>
<div class="t" style="left:36.50px;top:604px;font-size:9px;color:#4a4a4a;font-weight:400;transform:scaleY(1.12);transform-origin:50% 7px;letter-spacing:0.12px;">конусная</div>
<div class="t" style="right:1058.50px;top:593px;font-size:9px;color:#4a4a4a;font-weight:400;transform:scaleY(1.12);transform-origin:50% 7px;letter-spacing:0.07px;">300,00</div>
<div class="t" style="right:722.50px;top:593px;font-size:9px;color:#4a4a4a;font-weight:400;transform:scaleY(1.12);transform-origin:50% 7px;letter-spacing:0.07px;">300,00</div>
<div class="t" style="left:36.50px;top:616px;font-size:9px;color:#4a4a4a;font-weight:400;transform:scaleY(1.12);transform-origin:50% 7px;letter-spacing:0.12px;">Выключатель массы</div>
<div class="t" style="right:1058.50px;top:616px;font-size:9px;color:#4a4a4a;font-weight:400;transform:scaleY(1.12);transform-origin:50% 7px;letter-spacing:0.07px;">1 666,67</div>
<div class="t" style="right:722.50px;top:616px;font-size:9px;color:#4a4a4a;font-weight:400;transform:scaleY(1.12);transform-origin:50% 7px;letter-spacing:0.07px;">1 666,67</div>
<div class="t" style="left:36.50px;top:628px;font-size:9px;color:#4a4a4a;font-weight:400;transform:scaleY(1.12);transform-origin:50% 7px;letter-spacing:0.12px;">выключатель противотуманных</div>
<div class="t" style="left:36.50px;top:639px;font-size:9px;color:#4a4a4a;font-weight:400;transform:scaleY(1.12);transform-origin:50% 7px;letter-spacing:0.12px;">фар</div>
<div class="t" style="right:1058.50px;top:628px;font-size:9px;color:#4a4a4a;font-weight:400;transform:scaleY(1.12);transform-origin:50% 7px;letter-spacing:0.07px;">134,58</div>
<div class="t" style="right:722.50px;top:628px;font-size:9px;color:#4a4a4a;font-weight:400;transform:scaleY(1.12);transform-origin:50% 7px;letter-spacing:0.07px;">134,58</div>
<div class="t" style="left:36.50px;top:651px;font-size:9px;color:#4a4a4a;font-weight:400;transform:scaleY(1.12);transform-origin:50% 7px;letter-spacing:0.12px;">Гайка карданного вала</div>
<div class="t" style="right:1058.50px;top:651px;font-size:9px;color:#4a4a4a;font-weight:400;transform:scaleY(1.12);transform-origin:50% 7px;letter-spacing:0.07px;">400,00</div>
<div class="t" style="right:722.50px;top:651px;font-size:9px;color:#4a4a4a;font-weight:400;transform:scaleY(1.12);transform-origin:50% 7px;letter-spacing:0.07px;">400,00</div>
<div class="t" style="left:36.50px;top:663px;font-size:9px;color:#4a4a4a;font-weight:400;transform:scaleY(1.12);transform-origin:50% 7px;letter-spacing:0.12px;">Герметик-фиксатор резьбы</div>
<div class="t" style="right:1058.50px;top:663px;font-size:9px;color:#4a4a4a;font-weight:400;transform:scaleY(1.12);transform-origin:50% 7px;letter-spacing:0.07px;">467,08</div>
<div class="t" style="right:722.50px;top:663px;font-size:9px;color:#4a4a4a;font-weight:400;transform:scaleY(1.12);transform-origin:50% 7px;letter-spacing:0.07px;">467,08</div>
<div class="t" style="left:36.50px;top:675px;font-size:9px;color:#4a4a4a;font-weight:400;transform:scaleY(1.12);transform-origin:50% 7px;letter-spacing:0.12px;">Гильза цилиндров в сборе</div>
<div class="t" style="right:1058.50px;top:675px;font-size:9px;color:#4a4a4a;font-weight:400;transform:scaleY(1.12);transform-origin:50% 7px;letter-spacing:0.07px;">42 000,00</div>
<div class="t" style="right:722.50px;top:675px;font-size:9px;color:#4a4a4a;font-weight:400;transform:scaleY(1.12);transform-origin:50% 7px;letter-spacing:0.07px;">42 000,00</div>
<div class="t" style="left:36.50px;top:687px;font-size:9px;color:#4a4a4a;font-weight:400;transform:scaleY(1.12);transform-origin:50% 7px;letter-spacing:0.12px;">Гильза цилиндров КМЗ</div>
<div class="t" style="right:1058.50px;top:687px;font-size:9px;color:#4a4a4a;font-weight:400;transform:scaleY(1.12);transform-origin:50% 7px;letter-spacing:0.07px;">35 000,00</div>
<div class="t" style="right:722.50px;top:687px;font-size:9px;color:#4a4a4a;font-weight:400;transform:scaleY(1.12);transform-origin:50% 7px;letter-spacing:0.07px;">35 000,00</div>
<div class="t" style="left:36.50px;top:699px;font-size:9px;color:#4a4a4a;font-weight:400;transform:scaleY(1.12);transform-origin:50% 7px;letter-spacing:0.12px;">датчик блокировки моста</div>
<div class="t" style="right:1058.50px;top:699px;font-size:9px;color:#4a4a4a;font-weight:400;transform:scaleY(1.12);transform-origin:50% 7px;letter-spacing:0.07px;">2 500,00</div>
<div class="t" style="right:722.50px;top:699px;font-size:9px;color:#4a4a4a;font-weight:400;transform:scaleY(1.12);transform-origin:50% 7px;letter-spacing:0.07px;">2 500,00</div>
<div class="a" style="left:29px;top:121px;width:1px;height:590px;background:#b4b4b4"></div>
<div class="a" style="left:186px;top:121px;width:1px;height:590px;background:#c0c0c0"></div>
<div class="a" style="left:8px;top:213px;width:1288px;height:1px;background:#b4b4b4"></div>
<div class="a" style="left:30px;top:211px;width:159.5px;height:18px;box-sizing:border-box;border:1.8px solid #f9d02e;border-left:none;border-bottom-width:1.6px"></div>
<div class="a" style="left:10px;top:216px;width:9px;height:9px;box-sizing:border-box;border:1px solid #bdbdbd;border-radius:2px;background:#fff;"></div>
<div class="a" style="left:12px;top:220px;width:5px;height:1px;background:#707070"></div>
<div class="a" style="left:14px;top:225px;width:1px;height:486px;background:#a0a0a0"></div>
<svg class="a" style="left:1299px;top:128px" width="6" height="4" viewBox="0 0 6 4"><path d="M0.5 3H5.5L3 0Z" fill="#bdbdbd"/></svg>
<div class="a" style="left:1299px;top:338px;width:6px;height:356px;background:#d5d5d5;border-radius:3px"></div>
<div class="a" style="left:1299px;top:138px;width:6px;height:208px;background:#9b9b9b;border-radius:3px"></div>
<svg class="a" style="left:1299px;top:700px" width="6" height="4" viewBox="0 0 6 4"><path d="M0 0H6L3 4Z" fill="#333"/></svg>
<div class="a" style="left:25px;top:713px;width:1254px;height:6px;background:#d5d5d5;border-radius:3px"></div>
<div class="a" style="left:25px;top:713px;width:1020px;height:6px;background:#9b9b9b;border-radius:3px"></div>
<svg class="a" style="left:15px;top:714px" width="3" height="5" viewBox="0 0 3 5"><path d="M3 0V5L0 2.5Z" fill="#c4c4c4"/></svg>
<svg class="a" style="left:1287px;top:714px" width="3" height="5" viewBox="0 0 3 5"><path d="M0 0V5L3 2.5Z" fill="#333"/></svg>
<div class="t" style="left:926.00px;top:663px;font-size:14.9px;color:#cbcbcb;font-weight:400;">Активация Windows</div>
<div class="t" style="left:926.00px;top:681px;font-size:11.25px;color:#c8c8c8;font-weight:400;">Чтобы активировать Windows, перейдите в раздел &quot;Параметры&quot;.</div>
<div class="a" style="left:1322px;top:0px;width:1px;height:731px;background:#8f8f8f"></div>
<div class="a" style="left:0px;top:731px;width:1322px;height:30px;background:linear-gradient(90deg,#233a43 0%,#233a42 20%,#213442 55%,#1c2841 85%,#1b2645 100%)"></div>
<div class="a" style="left:0px;top:761px;width:1327px;height:1px;background:#c8c8c8"></div>
<div class="a" style="left:176px;top:731px;width:37px;height:30px;background:#4a5a62"></div>
<div class="a" style="left:213px;top:731px;width:36px;height:30px;background:#b06a2c"></div>
<div class="a" style="left:69px;top:759px;width:30px;height:2px;background:#6aa8e0"></div>
<div class="a" style="left:105px;top:759px;width:31px;height:2px;background:#6aa8e0"></div>
<div class="a" style="left:142px;top:759px;width:30px;height:2px;background:#6aa8e0"></div>
<div class="a" style="left:176px;top:759px;width:37px;height:2px;background:#6aa8e0"></div>
<div class="a" style="left:213px;top:759px;width:36px;height:2px;background:#f07a1a"></div>
<svg class="a" style="left:2px;top:739px" width="17" height="14" viewBox="0 0 17 14"><path d="M0 1H6L7.5 2.5H16V13H0Z" fill="#f4c94a"/><rect x="0" y="3.5" width="16" height="9.5" fill="#fbd868"/><path d="M4 13V8H12V13H10V10H6V13Z" fill="#3a9ae6"/></svg>
<svg class="a" style="left:41px;top:739px" width="13" height="13" viewBox="0 0 13 13"><path d="M6.5 0.5L12.5 2.5V6.5C12.5 9.5 10 11.5 6.5 12.8C3 11.5 0.5 9.5 0.5 6.5V2.5Z" fill="#f2f2f2"/><path d="M6.5 0.5V12.8M0.5 6H12.5" stroke="#1f3641" stroke-width="1.2"/></svg>
<svg class="a" style="left:75px;top:737px" width="18" height="18" viewBox="0 0 18 18"><circle cx="9" cy="9" r="8.5" fill="#e8e8e8"/><path d="M5.5 4.5L9 9.5L12.5 4.5M9 9.5V14.5" fill="none" stroke="#e21a1a" stroke-width="1.8"/></svg>
<svg class="a" style="left:111px;top:737px" width="19" height="18" viewBox="0 0 19 18"><path d="M9.5 0.8A8 8 0 1 1 5 15.5L0.8 17.2L2.2 13A8 8 0 0 1 9.5 0.8Z" fill="#fff"/><path d="M9.5 2.2A6.6 6.6 0 1 1 5.5 14.2L2.8 15.2L3.7 12.6A6.6 6.6 0 0 1 9.5 2.2Z" fill="#4dc247"/><path d="M6.5 5.5C6.5 9 9 11.5 12.5 12L13 10.5L11 9.5L10.3 10.3C9 9.7 8.3 9 7.7 7.7L8.5 7L7.5 5Z" fill="#fff"/></svg>
<svg class="a" style="left:149px;top:737px" width="17" height="17" viewBox="0 0 17 17"><path d="M0 2.5L9 0V17L0 14.5Z" fill="#0a6fc9"/><rect x="9" y="4.5" width="8" height="8" fill="#0a6fc9"/><rect x="10" y="5.5" width="6.5" height="6" fill="#fff"/><path d="M10 5.5L13.2 8.5L16.5 5.5" fill="none" stroke="#0a6fc9" stroke-width="1"/><ellipse cx="4.5" cy="8.5" rx="2.3" ry="2.8" fill="none" stroke="#fff" stroke-width="1.5"/></svg>
<svg class="a" style="left:185px;top:737px" width="18" height="18" viewBox="0 0 18 18"><circle cx="9" cy="9" r="8.8" fill="#f8d21c"/><path d="M3.8 7L5.6 5.6V12.2" fill="none" stroke="#d42a1c" stroke-width="1.8"/><path d="M12.6 7.4A2.6 2.6 0 1 0 11.2 11.6H15" fill="none" stroke="#d42a1c" stroke-width="1.8"/></svg>
<svg class="a" style="left:222px;top:737px" width="18" height="18" viewBox="0 0 18 18"><rect x="9" y="2" width="8" height="13.5" fill="#ffffff"/><path d="M10.5 4.5H16M10.5 6.5H16M10.5 8.5H16M10.5 10.5H16M10.5 12.5H16" stroke="#6d8ccc" stroke-width="1"/><path d="M0 2.5L10 0V18L0 15.5Z" fill="#2b579a"/><path d="M2 6L3.2 12L4.8 8L6.3 12L7.6 6" fill="none" stroke="#fff" stroke-width="1"/></svg>
<div class="t" style="left:1160.50px;top:741px;font-size:8.7px;color:#dcdcdc;font-weight:400;transform:scaleY(1.15);transform-origin:50% 7px;">RU</div>
<svg class="a" style="left:1183px;top:743px" width="10" height="6" viewBox="0 0 10 6"><path d="M0.5 5.5L5 1L9.5 5.5" fill="none" stroke="#e8e8e8" stroke-width="1.1"/></svg>
<svg class="a" style="left:1199px;top:741px" width="13" height="11" viewBox="0 0 13 11"><rect x="3.5" y="1.5" width="9" height="6.5" fill="none" stroke="#e8e8e8"/><path d="M8 8V10M5.5 10.5H10.5" stroke="#e8e8e8"/><rect x="0.5" y="0.5" width="3" height="3" fill="none" stroke="#e8e8e8" stroke-width="0.8"/><path d="M2 3.5V8" stroke="#e8e8e8" stroke-width="0.8"/></svg>
<svg class="a" style="left:1217px;top:741px" width="13" height="10" viewBox="0 0 13 10"><path d="M0.5 3H3L6 0.5V9.5L3 7H0.5Z" fill="none" stroke="#e8e8e8"/><path d="M8 3A2.5 2.5 0 0 1 8 7M10 1.5A4.5 4.5 0 0 1 10 8.5" fill="none" stroke="#e8e8e8"/></svg>
<div class="t" style="left:1240.00px;width:36.00px;text-align:center;top:736px;font-size:8.2px;color:#e4e4e4;font-weight:400;transform:scaleY(1.15);transform-origin:50% 6px;">11:38</div>
<div class="t" style="left:1236.00px;width:44.00px;text-align:center;top:750px;font-size:8.2px;color:#e4e4e4;font-weight:400;transform:scaleY(1.15);transform-origin:50% 6px;">17.07.2023</div>
<div class="a" style="left:1318px;top:731px;width:1px;height:30px;background:#44506a"></div>
<svg class="a" style="left:1290px;top:739px" width="20" height="19" viewBox="0 0 20 19"><path d="M0.5 1H13V10H7L4 12.5V10H0.5Z" fill="#f4f4f4"/><path d="M2.5 3.5H11M2.5 5.5H11M2.5 7.5H9" stroke="#8a94aa" stroke-width="0.9"/><circle cx="12.5" cy="12.3" r="6" fill="#2a2a2a" stroke="#777" stroke-width="0.8"/><text x="12.5" y="15.3" text-anchor="middle" font-family="Liberation Sans" font-size="8.5" fill="#fff">8</text></svg>
<div class="a" style="left:1317px;top:350px;width:10px;height:10px;box-sizing:border-box;border:1.3px solid #8a8a8a;border-radius:50%;background:#fff"></div>
<div class="a" style="left:596px;top:756px;width:10px;height:10px;box-sizing:border-box;border:1.3px solid #8a8a8a;border-radius:50%;background:#fff"></div>
<div class="a" style="left:1317px;top:757px;width:10px;height:10px;box-sizing:border-box;border:1.3px solid #8a8a8a;border-radius:50%;background:#fff"></div>
</body></html>
